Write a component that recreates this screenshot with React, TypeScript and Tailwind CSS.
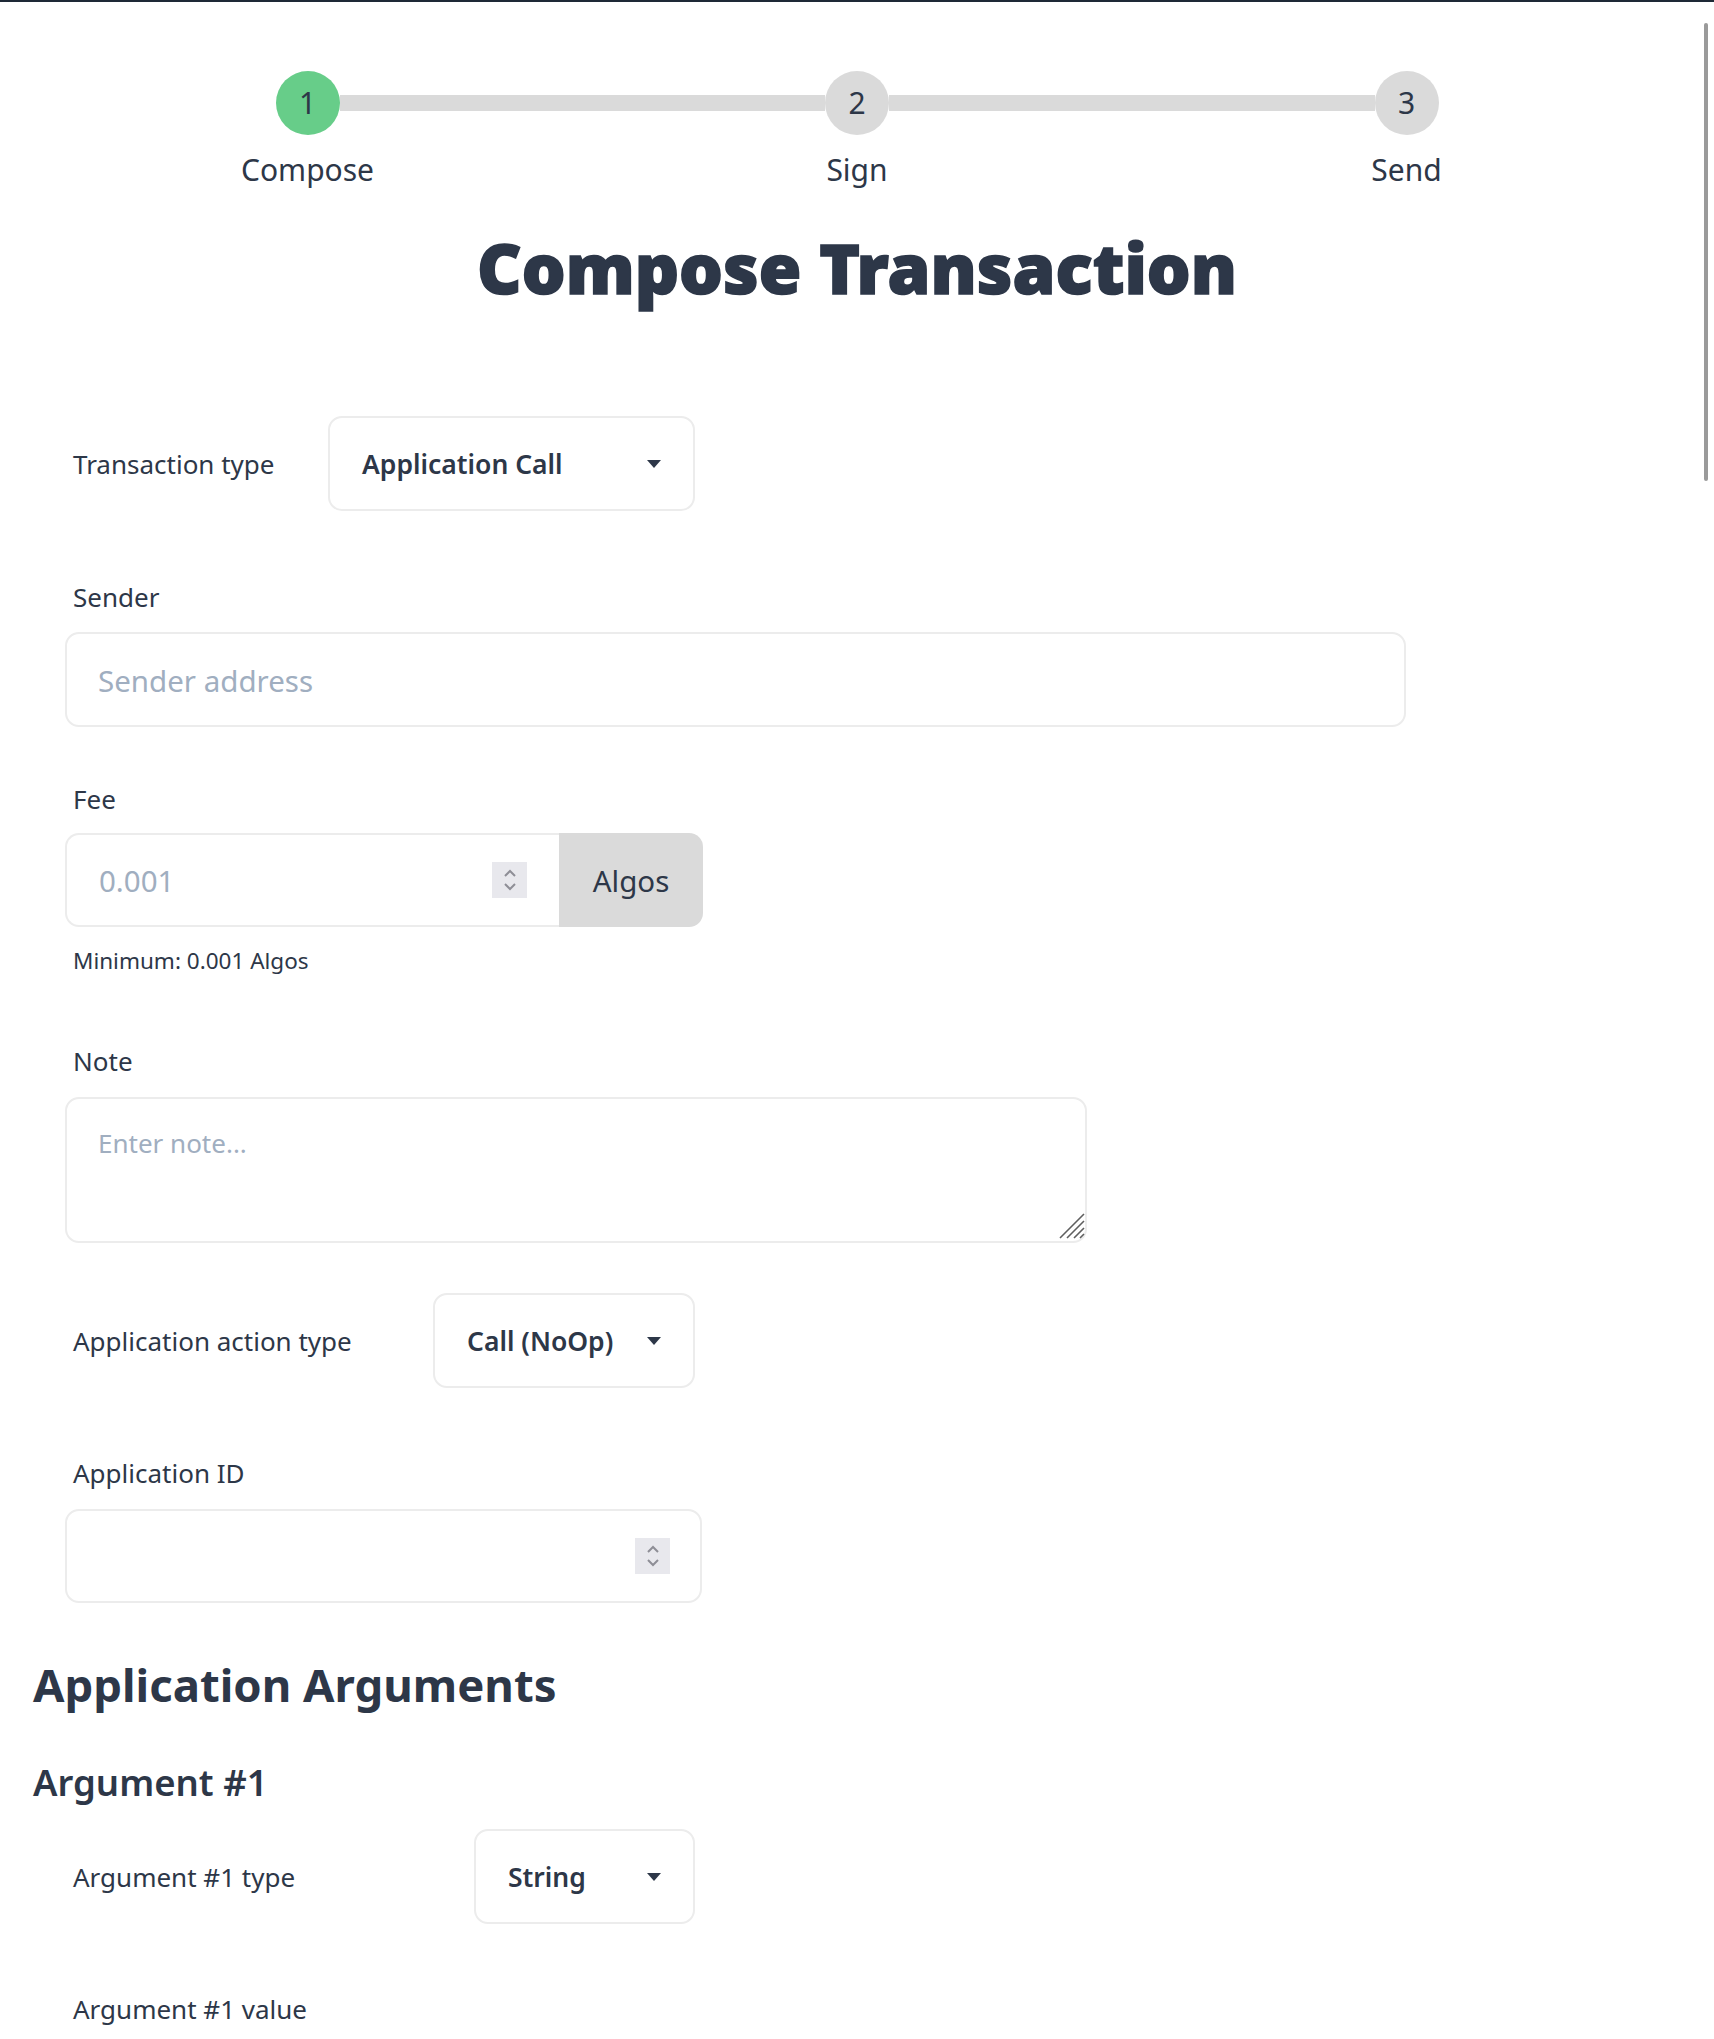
import React from "react";

function Triangle() {
  return (
    <svg width="14" height="8" viewBox="0 0 14 8" className="shrink-0">
      <path d="M0 0 H14 L7 8 Z" fill="#2d3748" />
    </svg>
  );
}

function Spinner() {
  return (
    <div className="flex h-[36px] w-[35px] shrink-0 flex-col items-center justify-center gap-[6px] bg-[#e8e8ed]">
      <svg width="14" height="8" viewBox="0 0 14 8">
        <path d="M2 7 L7 2 L12 7" stroke="#8e8e96" strokeWidth="2" fill="none" />
      </svg>
      <svg width="14" height="8" viewBox="0 0 14 8">
        <path d="M2 1 L7 6 L12 1" stroke="#8e8e96" strokeWidth="2" fill="none" />
      </svg>
    </div>
  );
}

function Select({ value, width }: { value: string; width: string }) {
  return (
    <div
      className={
        "flex h-[95px] items-center justify-between rounded-[14px] border-2 border-[#ececec] bg-white pl-[32px] pr-[32px] " +
        width
      }
    >
      <span className="text-[26.5px] font-semibold leading-[36px] text-[#2d3748]">{value}</span>
      <Triangle />
    </div>
  );
}

function SelectRow({ label, value, width }: { label: string; value: string; width: string }) {
  return (
    <div className="flex w-[630px] items-center justify-between pl-[8px]">
      <span className="text-[26px] leading-[36px] text-[#2d3748]">{label}</span>
      <Select value={value} width={width} />
    </div>
  );
}

function Label({ children, className }: { children: React.ReactNode; className: string }) {
  return (
    <div className={"pl-[8px] text-[26px] leading-[36px] text-[#2d3748] " + className}>{children}</div>
  );
}

function StepCircle({ n, active }: { n: number; active?: boolean }) {
  return (
    <div
      className={
        "flex h-[64px] w-[64px] shrink-0 items-center justify-center rounded-full text-[30px] leading-none text-[#2d3748] " +
        (active ? "bg-[#67cd89]" : "bg-[#dadada]")
      }
    >
      {n}
    </div>
  );
}

function StepLabel({ text }: { text: string }) {
  return (
    <div className="flex w-[64px] justify-center">
      <span className="whitespace-nowrap text-[30px] leading-[40px] text-[#2d3748]">{text}</span>
    </div>
  );
}

export default function App() {
  return (
    <div className="min-h-screen bg-white font-['Noto_Sans',sans-serif] text-[#2d3748]">
      <div className="h-[2px] w-full bg-[#1e2936]" />

      {/* overlay scrollbar thumb */}
      <div className="fixed right-[6px] top-[23px] h-[458px] w-[4px] rounded-full bg-[#9a9a9a]" />

      {/* Stepper */}
      <div className="mx-auto mt-[69px] w-[1163px]">
        <div className="flex items-center">
          <StepCircle n={1} active />
          <div className="h-[16px] flex-1 bg-[#dadada]" />
          <StepCircle n={2} />
          <div className="h-[16px] flex-1 bg-[#dadada]" />
          <StepCircle n={3} />
        </div>
        <div className="mt-[15px] flex justify-between">
          <StepLabel text="Compose" />
          <StepLabel text="Sign" />
          <StepLabel text="Send" />
        </div>
      </div>

      <h1 className="mt-[36px] text-center text-[69px] font-black leading-[82px] text-[#2d3748] [-webkit-text-stroke:1.6px_#2d3748]">
        Compose Transaction
      </h1>

      <div className="px-[33px]">
        <div className="ml-[32px]">
          <div className="mt-[108px]">
            <SelectRow label="Transaction type" value="Application Call" width="w-[367px]" />
          </div>

          <Label className="mt-[68px]">Sender</Label>
          <div className="mt-[17px] flex h-[95px] w-[1341px] items-center rounded-[14px] border-2 border-[#ececec] pl-[31px] pt-[3px]">
            <span className="text-[29.5px] text-[#a0aec0]">Sender address</span>
          </div>

          <Label className="mt-[54px]">Fee</Label>
          <div className="mt-[16px] flex h-[94px] w-[638px]">
            <div className="flex flex-1 items-center justify-between rounded-l-[14px] border-2 border-r-0 border-[#ececec] pl-[32px] pr-[32px]">
              <span className="pt-[2px] text-[29.5px] text-[#a0aec0]">0.001</span>
              <Spinner />
            </div>
            <div className="flex w-[144px] items-center justify-center rounded-r-[14px] bg-[#dadada]">
              <span className="pt-[2px] text-[29.5px] text-[#2d3748]">Algos</span>
            </div>
          </div>
          <div className="mt-[18px] pl-[8px] text-[22.5px] leading-[32px] text-[#2d3748]">Minimum: 0.001 Algos</div>

          <Label className="mt-[66px]">Note</Label>
          <div className="relative mt-[18px] w-[1022px]">
            <textarea
              className="block h-[146px] w-full resize-none rounded-[14px] border-2 border-[#ececec] px-[31px] pt-[25px] text-[26px] leading-[39px] text-[#2d3748] outline-none placeholder:text-[#a0aec0]"
              placeholder="Enter note..."
            />
            <svg
              width="28"
              height="28"
              viewBox="0 0 28 28"
              className="pointer-events-none absolute bottom-[4px] right-[2px]"
            >
              <path d="M27 3 L3 27 M27 10 L10 27 M27 17 L17 27 M27 23 L23 27" stroke="#5f5f5f" strokeWidth="1.6" />
            </svg>
          </div>

          <div className="mt-[50px]">
            <SelectRow label="Application action type" value="Call (NoOp)" width="w-[262px]" />
          </div>

          <Label className="mt-[67px]">Application ID</Label>
          <div className="mt-[18px] flex h-[94px] w-[637px] items-center justify-end rounded-[14px] border-2 border-[#ececec] pr-[30px]">
            <Spinner />
          </div>
        </div>

        <h2 className="mt-[52px] text-[45.5px] font-bold leading-[58px] text-[#2d3748]">Application Arguments</h2>
        <h3 className="mt-[44px] text-[36.5px] font-semibold leading-[50px] text-[#2d3748]">Argument #1</h3>

        <div className="ml-[32px]">
          <div className="mt-[22px]">
            <SelectRow label="Argument #1 type" value="String" width="w-[221px]" />
          </div>
          <Label className="mt-[67px]">Argument #1 value</Label>
          <div className="mt-[17px] h-[95px] w-[1341px] rounded-[14px] border-2 border-[#ececec]" />
          <div className="h-[60px]" />
        </div>
      </div>
    </div>
  );
}
